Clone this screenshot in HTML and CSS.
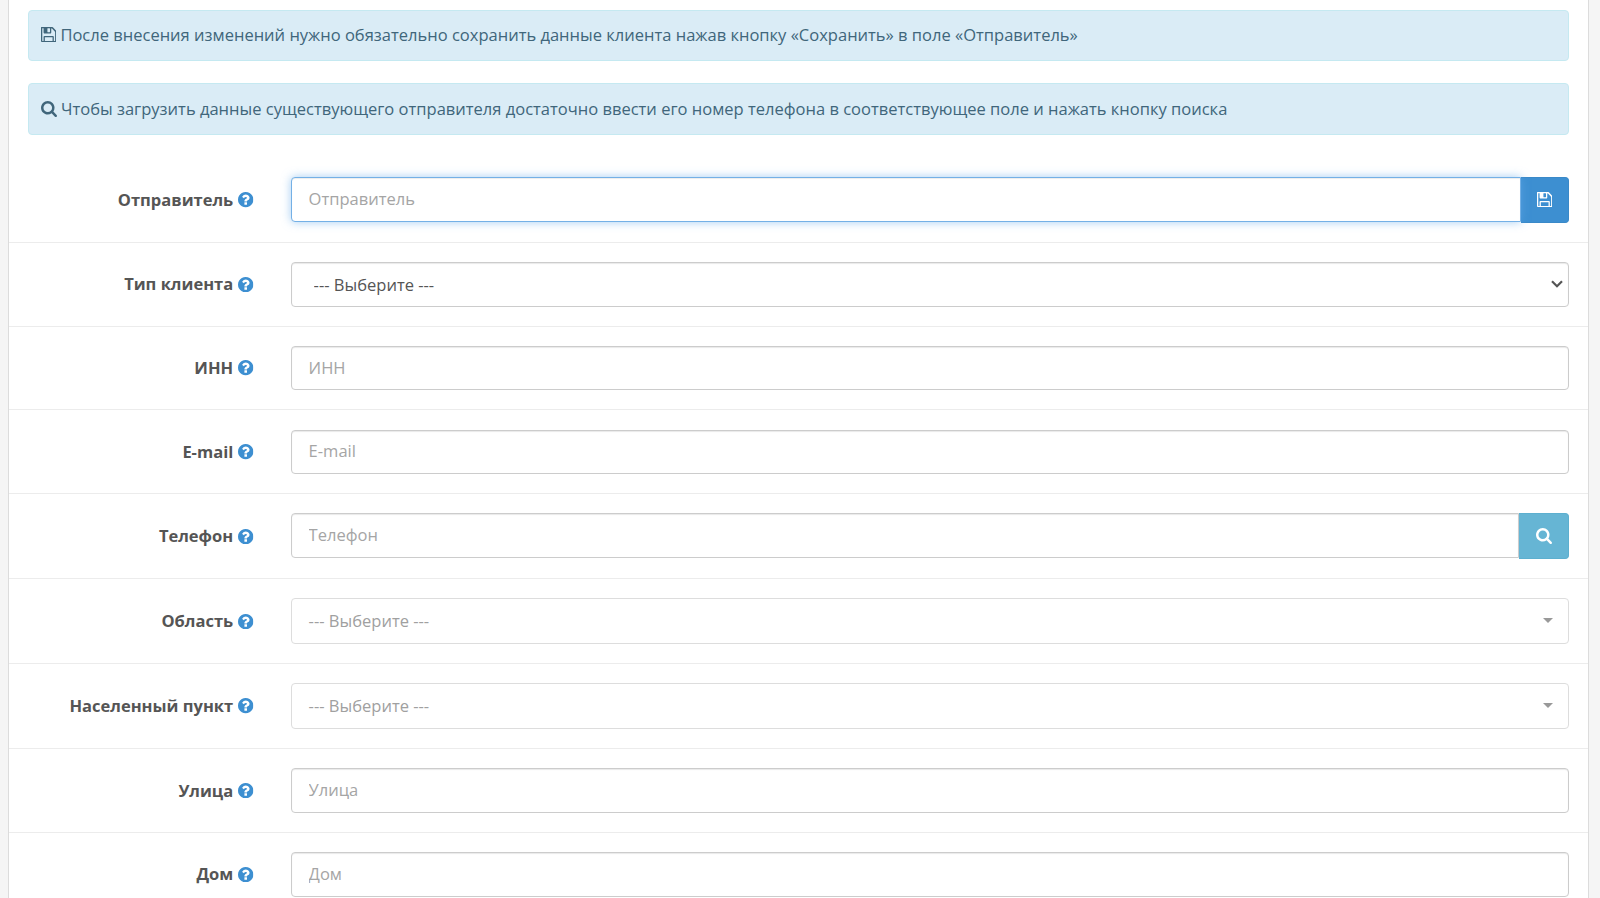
FILE: index.html
```html
<!DOCTYPE html>
<html lang="ru">
<head>
    <meta charset="UTF-8">
    <meta name="viewport" content="width=device-width, initial-scale=1.0">
    <title>Отправитель</title>
    <link rel="stylesheet" href="styles.css">
</head>
<body>
    <!-- Shared icons -->
    <svg class="sprite" xmlns="http://www.w3.org/2000/svg">
        <symbol id="save" viewBox="128 128 1536 1536">
            <path d="M512 1536h768v-384h-768v384zm896 0h128v-896q0-14-10-38.5t-20-34.5l-281-281q-10-10-34-20t-39-10v416q0 40-28 68t-68 28h-576q-40 0-68-28t-28-68v-416h-128v1280h128v-416q0-40 28-68t68-28h832q40 0 68 28t28 68v416zm-384-928v-320q0-13-9.5-22.5t-22.5-9.5h-192q-13 0-22.5 9.5t-9.5 22.5v320q0 13 9.5 22.5t22.5 9.5h192q13 0 22.5-9.5t9.5-22.5zm640 32v896q0 40-28 68t-68 28h-1344q-40 0-68-28t-28-68v-1344q0-40 28-68t68-28h928q40 0 88 20t76 48l280 280q28 28 48 76t20 88z"/>
        </symbol>
        <symbol id="search" viewBox="64 128 1664 1664">
            <path d="M1216 832q0-185-131.5-316.5t-316.5-131.5-316.5 131.5-131.5 316.5 131.5 316.5 316.5 131.5 316.5-131.5 131.5-316.5zm512 832q0 52-38 90t-90 38q-54 0-90-38l-343-342q-179 124-399 124-143 0-273.5-55.5t-225-150-150-225-55.5-273.5 55.5-273.5 150-225 225-150 273.5-55.5 273.5 55.5 225 150 150 225 55.5 273.5q0 220-124 399l343 343q37 37 37 90z"/>
        </symbol>
        <symbol id="help" viewBox="128 128 1536 1536">
            <path d="M1024 1376v-192q0-14-9-23t-23-9h-192q-14 0-23 9t-9 23v192q0 14 9 23t23 9h192q14 0 23-9t9-23zm256-672q0-88-55.5-163t-138.5-116-170-41q-243 0-371 213-15 24 8 42l132 100q7 6 19 6 16 0 25-12 53-68 86-92 34-24 86-24 48 0 85.5 26t37.5 59q0 38-20 61t-68 45q-63 28-115.5 86.5t-52.5 125.5v36q0 14 9 23t23 9h192q14 0 23-9t9-23q0-19 21.5-49.5t54.5-49.5q32-18 49-28.5t46-35 44.5-48 28-60.5 12.5-81zm384 192q0 209-103 385.5t-279.5 279.5-385.5 103-385.5-103-279.5-279.5-103-385.5 103-385.5 279.5-279.5 385.5-103 385.5 103 279.5 279.5 103 385.5z"/>
        </symbol>
    </svg>

    <div class="panel">
        <div class="alert alert-save">
            <svg class="icon"><use href="#save"/></svg>
            <span>После внесения изменений нужно обязательно сохранить данные клиента нажав кнопку «Сохранить» в поле «Отправитель»</span>
        </div>
        <div class="alert alert-search">
            <svg class="icon icon-search"><use href="#search"/></svg>
            <span>Чтобы загрузить данные существующего отправителя достаточно ввести его номер телефона в соответствующее поле и нажать кнопку поиска</span>
        </div>

        <form class="form">
            <div class="form-group">
                <label for="sender">Отправитель <svg class="icon help"><use href="#help"/></svg></label>
                <div class="input-group">
                    <input class="form-control focused" id="sender" type="text" placeholder="Отправитель">
                    <button class="btn btn-primary" type="button"><svg class="icon"><use href="#save"/></svg></button>
                </div>
            </div>
            <div class="form-group">
                <label for="type">Тип клиента <svg class="icon help"><use href="#help"/></svg></label>
                <div class="select-wrap">
                    <select class="form-control" id="type">
                        <option>--- Выберите ---</option>
                    </select>
                    <svg class="chevron" viewBox="0 0 12 8"><path d="M1 1.2l5 5 5-5"/></svg>
                </div>
            </div>
            <div class="form-group">
                <label for="inn">ИНН <svg class="icon help"><use href="#help"/></svg></label>
                <input class="form-control" id="inn" type="text" placeholder="ИНН">
            </div>
            <div class="form-group">
                <label for="email">E-mail <svg class="icon help"><use href="#help"/></svg></label>
                <input class="form-control" id="email" type="text" placeholder="E-mail">
            </div>
            <div class="form-group">
                <label for="phone">Телефон <svg class="icon help"><use href="#help"/></svg></label>
                <div class="input-group">
                    <input class="form-control" id="phone" type="text" placeholder="Телефон">
                    <button class="btn btn-info" type="button"><svg class="icon icon-search"><use href="#search"/></svg></button>
                </div>
            </div>
            <div class="form-group">
                <label>Область <svg class="icon help"><use href="#help"/></svg></label>
                <div class="dropdown"><span>--- Выберите ---</span><i class="caret"></i></div>
            </div>
            <div class="form-group">
                <label>Населенный пункт <svg class="icon help"><use href="#help"/></svg></label>
                <div class="dropdown"><span>--- Выберите ---</span><i class="caret"></i></div>
            </div>
            <div class="form-group">
                <label for="street">Улица <svg class="icon help"><use href="#help"/></svg></label>
                <input class="form-control" id="street" type="text" placeholder="Улица">
            </div>
            <div class="form-group">
                <label for="house">Дом <svg class="icon help"><use href="#help"/></svg></label>
                <input class="form-control" id="house" type="text" placeholder="Дом">
            </div>
        </form>
    </div>
</body>
</html>
```

FILE: styles.css
```css
* {
    box-sizing: border-box;
}

body {
    margin: 0;
    height: 100vh;
    overflow: hidden;
    background-color: #f5f5f5;
    color: #555;
    font-family: "Open Sans", "Noto Sans", sans-serif;
    font-size: 16.53px;
    line-height: 24px;
}

.sprite {
    display: none;
}

.icon {
    width: 15.4px;
    height: 15.4px;
    fill: currentColor;
    flex: none;
}

.icon-search {
    width: 16px;
    height: 16px;
}

/* White panel that holds the form */
.panel {
    height: 100vh;
    margin: 0 11px 0 8px;
    padding-top: 10px;
    overflow: hidden;
    background-color: #fff;
    border-left: 1px solid #dcdcdc;
    border-right: 1px solid #dcdcdc;
}

/* Alerts */
.alert {
    display: flex;
    align-items: center;
    gap: 4px;
    height: 51px;
    margin: 0 19px 22px;
    padding: 0 12px 2px;
    background-color: #daecf6;
    border: 1px solid #c5e9f1;
    border-radius: 4px;
    color: #40667b;
    white-space: nowrap;
}

.alert-search {
    height: 52px;
    padding: 0 12px;
}

/* Form rows */
.form-group {
    display: flex;
    align-items: center;
    padding: 19.1px 19px;
    border-top: 1px solid #ececec;
}

.form-group:first-child {
    padding-top: 20px;
    border-top: none;
}

.form-group label {
    display: flex;
    flex: none;
    align-items: center;
    justify-content: flex-end;
    gap: 5px;
    width: 263px;
    padding-right: 37.4px;
    font-weight: bold;
    white-space: nowrap;
}

.help {
    color: #3d8fd1;
}

/* Controls */
.form-control {
    display: block;
    flex: 1;
    width: 100%;
    min-width: 0;
    height: 44.6px;
    padding: 0 17px 2px 16.6px;
    background-color: #fff;
    border: 1px solid #ccc;
    border-radius: 4px;
    box-shadow: inset 0 1px 1px rgba(0, 0, 0, 0.09);
    color: #555;
    font: inherit;
    outline: none;
}

.form-control::placeholder {
    color: #a5a5a5;
    opacity: 1;
}

.input-group {
    display: flex;
    flex: 1;
}

.input-group .form-control {
    border-radius: 4px 0 0 4px;
}

.focused {
    position: relative;
    border-color: #74b0e6;
    box-shadow: inset 0 1px 1px rgba(0, 0, 0, 0.075), 0 0 10px rgba(102, 170, 233, 0.6);
}

.btn {
    display: flex;
    align-items: center;
    justify-content: center;
    width: 48px;
    height: 45.8px;
    padding: 0;
    border: 1px solid;
    border-left: none;
    border-radius: 0 4px 4px 0;
    color: #fff;
}

.btn-primary {
    background-color: #3d8fd1;
    border-color: #3a89c8;
}

.btn-info {
    width: 50px;
    background-color: #66b5d4;
    border-color: #5dafcf;
}

.select-wrap {
    position: relative;
    flex: 1;
}

.select-wrap select {
    padding: 2px 22px 0 21.6px;
    appearance: none;
}

.chevron {
    position: absolute;
    top: 18px;
    right: 6.5px;
    width: 12px;
    height: 8px;
    fill: none;
    stroke: #555;
    stroke-width: 2.2;
}

.dropdown {
    display: flex;
    flex: 1;
    align-items: center;
    justify-content: space-between;
    height: 45.8px;
    padding: 0 15.5px 1px 16.6px;
    border: 1px solid #ddd;
    border-radius: 4px;
    color: #a0a0a0;
}

.caret {
    border: 5px solid transparent;
    border-top-color: #999;
    border-bottom: none;
}
```
